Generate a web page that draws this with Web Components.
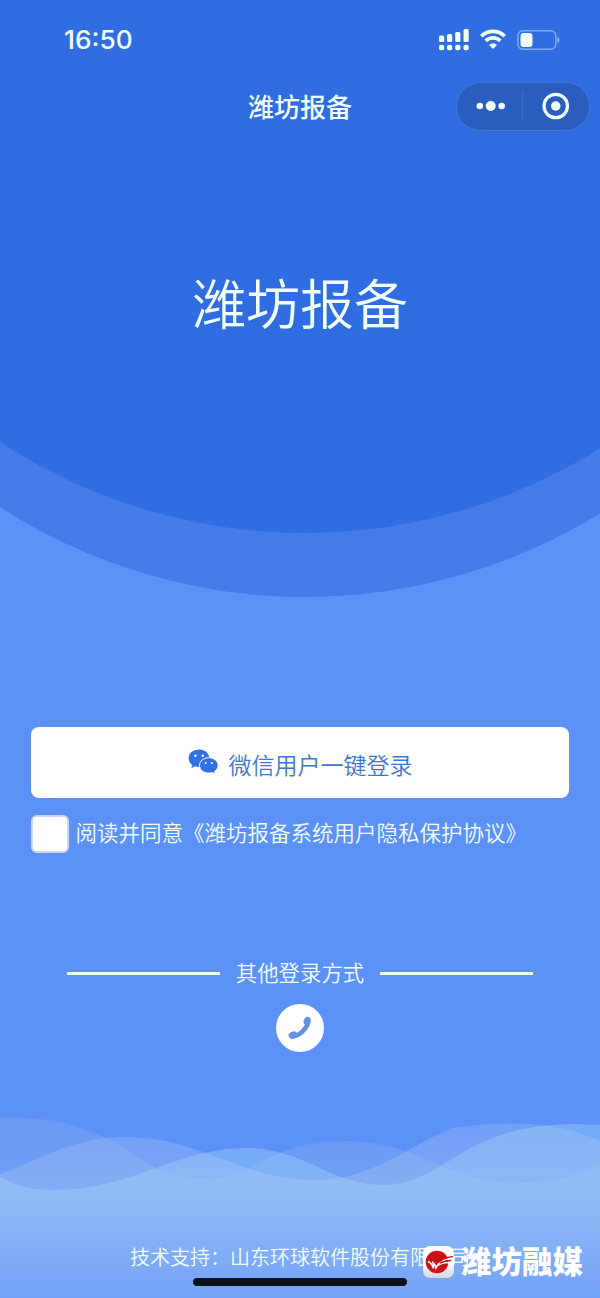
<!DOCTYPE html>
<html lang="zh-CN">
<head>
<meta charset="utf-8">
<title>潍坊报备</title>
<style>
  html, body {
    margin: 0;
    padding: 0;
  }
  body {
    width: 600px;
    height: 1298px;
    overflow: hidden;
    background: #5c91f7;
    color: #f1ffff;
    font-family: "Liberation Sans", "Noto Sans CJK SC", sans-serif;
  }
</style>
</head>
<body>
<login-page>
  <status-bar slot="top" time="16:50"></status-bar>
  <nav-bar slot="top">潍坊报备</nav-bar>
  <app-title>潍坊报备</app-title>
  <wechat-button>微信用户一键登录</wechat-button>
  <agree-check>阅读并同意《潍坊报备系统用户隐私保护协议》</agree-check>
  <line-divider>其他登录方式</line-divider>
  <phone-login></phone-login>
  <page-footer slot="bottom">技术支持：山东环球软件股份有限公司</page-footer>
  <media-mark slot="bottom">潍坊融媒</media-mark>
</login-page>

<script>
class BaseElement extends HTMLElement {
  constructor() {
    super()
    this._root = this.attachShadow({ mode: 'open' });
    this._root.innerHTML = this.render();
  }
}

class LoginPage extends BaseElement {
  render() {
    return `
    <style>
      :host {
        display: flex;
        flex-direction: column;
        position: relative;
        width: 600px;
        height: 1298px;
        overflow: hidden;
      }
      .bg {
        position: absolute;
        inset: 0;
        z-index: -1;
      }
      main {
        flex: 1;
        display: flex;
        flex-direction: column;
      }
    </style>
    <svg class="bg" width="600" height="1298" viewBox="0 0 600 1298">
      <defs>
        <linearGradient id="a" gradientUnits="userSpaceOnUse" x1="0" y1="1115" x2="0" y2="1298">
          <stop offset="0" stop-color="#a4c0e4" stop-opacity=".18"/>
          <stop offset=".4" stop-color="#a4c4ec" stop-opacity=".24"/>
          <stop offset="1" stop-color="#a8c8f4" stop-opacity=".08"/>
        </linearGradient>
        <linearGradient id="b" gradientUnits="userSpaceOnUse" x1="0" y1="1122" x2="0" y2="1298">
          <stop offset="0" stop-color="#b4ccf2" stop-opacity=".24"/>
          <stop offset=".35" stop-color="#bccbf6" stop-opacity=".32"/>
          <stop offset="1" stop-color="#bccbf6" stop-opacity=".1"/>
        </linearGradient>
        <linearGradient id="c" gradientUnits="userSpaceOnUse" x1="0" y1="1122" x2="0" y2="1298">
          <stop offset="0" stop-color="#a8e0f6" stop-opacity=".32"/>
          <stop offset=".4" stop-color="#a8e0f8" stop-opacity=".34"/>
          <stop offset="1" stop-color="#a8d0f8" stop-opacity=".12"/>
        </linearGradient>
      </defs>
      <circle cx="305" cy="35" r="562" fill="#457be9"/>
      <circle cx="305" cy="-24" r="557" fill="#306de0"/>
      <path fill="url(#a)" d="M0 1117 C46 1117 78 1123 110 1140 C142 1157 160 1179 205 1179 C252 1179 272 1141 342 1141 C425 1141 440 1183 526 1183 C560 1183 582 1172 600 1163 V1298 H0Z"/>
      <path fill="url(#b)" d="M0 1174 C38 1161 72 1137 125 1137 C202 1137 240 1180 315 1180 C372 1180 408 1146 452 1128 C510 1120 559 1122 600 1141 V1298 H0Z"/>
      <path fill="url(#c)" d="M0 1177 C17 1186 30 1190 56 1190 C130 1190 178 1148 245 1148 C305 1148 330 1185 382 1185 C445 1185 461 1124 575 1124 L600 1125 V1298 H0Z"/>
    </svg>
    <slot name="top"></slot>
    <main><slot></slot></main>
    <slot name="bottom"></slot>`;
  }
}

class StatusBar extends BaseElement {
  render() {
    return `
    <style>
      :host {
        display: flex;
        justify-content: space-between;
        align-items: center;
        height: 80px;
        padding: 0 40px 0 64px;
        box-sizing: border-box;
      }
      .time {
        margin-top: -1px;
        font: 550 26.300px/32px Inter, sans-serif;
      }
      svg { display: block; }
    </style>
    <span class="time">${this.getAttribute('time')}</span>
    <svg width="122" height="24" viewBox="438 28 122 24" fill="#f1ffff">
      <rect x="439" y="35.500" width="5.200" height="6.500" rx="1.500"/>
      <rect x="447" y="34" width="5.200" height="8" rx="1.500"/>
      <rect x="455.200" y="32" width="5.200" height="10" rx="1.500"/>
      <rect x="463.500" y="29" width="5.200" height="13" rx="1.500"/>
      <rect x="439" y="44.700" width="5.200" height="5.500" rx="1.800"/>
      <rect x="447" y="44.700" width="5.200" height="5.500" rx="1.800"/>
      <rect x="455.200" y="44.700" width="5.200" height="5.500" rx="1.800"/>
      <rect x="463.500" y="44.700" width="5.200" height="5.500" rx="1.800"/>
      <g fill="none" stroke="#f1ffff" stroke-width="3.700">
        <path d="M481.300 36.200 A16.500 16.500 0 0 1 504.700 36.200"/>
        <path d="M485.700 40.900 A10.300 10.300 0 0 1 500.300 40.900"/>
      </g>
      <path d="M489 44.900 A5.800 5.800 0 0 1 497 44.900 L493 49Z"/>
      <rect x="517.800" y="30.800" width="38" height="18.500" rx="5" fill="none" stroke="#7fa8f0" stroke-width="1.500"/>
      <rect x="520.500" y="33" width="12" height="14" rx="3"/>
      <path d="M557.500 36.800 Q559.500 38 559.500 40 T557.500 43.200Z" fill="#9abcf4"/>
    </svg>`;
  }
}

class NavBar extends BaseElement {
  render() {
    return `
    <style>
      :host {
        display: grid;
        grid-template-columns: 1fr auto 1fr;
        align-items: center;
        height: 52px;
        padding: 0 10.500px;
        font-size: 26px;
        font-weight: 500;
      }
      .title { margin-top: -2px; }
      .capsule {
        justify-self: end;
        display: flex;
        align-items: center;
        box-sizing: border-box;
        width: 134px;
        height: 49px;
        border: 1px solid #4177dc;
        border-radius: 25px;
        background: #2a5dbd;
      }
      .capsule > * { flex: 1; }
      .capsule i {
        flex: none;
        width: 1px;
        height: 30px;
        background: #3a6dcb;
      }
    </style>
    <span></span>
    <span class="title"><slot></slot></span>
    <div class="capsule">
      <svg height="30" viewBox="-33 -15 66 30" fill="#f1ffff">
        <circle cx="-10" r="3.300"/><circle cx="1" r="5"/><circle cx="12" r="3.300"/>
      </svg>
      <i></i>
      <svg height="30" viewBox="-33 -15 66 30" fill="#f1ffff">
        <circle r="4.800"/><circle r="11.800" fill="none" stroke="#f1ffff" stroke-width="3.200"/>
      </svg>
    </div>`;
  }
}

class AppTitle extends BaseElement {
  render() {
    return `
    <style>
      :host {
        display: block;
        margin-top: 134px;
        height: 80px;
        text-align: center;
        font-size: 54px;
        font-weight: 350;
        line-height: 80px;
      }
    </style>
    <slot></slot>`;
  }
}

class WechatButton extends BaseElement {
  render() {
    return `
    <style>
      :host {
        display: flex;
        justify-content: center;
        align-items: center;
        gap: 10px;
        margin: 381px 31px 0;
        height: 71px;
        border-radius: 8px;
        background: #fff;
        color: #3f76cb;
        font-size: 23px;
        font-weight: 350;
      }
      svg { margin-top: -1px; }
      .text { margin-top: 2px; }
    </style>
    <svg width="31" height="26" viewBox="0 0 31 26" fill="#2f70e5">
      <path d="M11 .5C5 .5.700 4.400.700 9.300c0 2.800 1.400 5.300 3.700 6.900l-1.100 3.100 3.900-2c1.200.4 2.500.6 3.800.6 5.900 0 10.200-3.900 10.200-8.700S17 .5 11 .5Z"/>
      <path stroke="#fff" stroke-width="1" d="M20.800 8.700c-5 0-9.300 3.300-9.300 7.700s4.200 7.700 9.300 7.700c1.100 0 2.200-.2 3.200-.5l3.300 1.600-.8-2.700c2.200-1.400 3.600-3.600 3.600-6.100 0-4.400-4.200-7.700-9.300-7.700Z"/>
      <g fill="#fff"><circle cx="7.500" cy="6.800" r="1.200"/><circle cx="14.700" cy="6.800" r="1.200"/><circle cx="17.700" cy="14" r="1.050"/><circle cx="23.800" cy="14" r="1.050"/></g>
    </svg>
    <span class="text"><slot></slot></span>`;
  }
}

class AgreeCheck extends BaseElement {
  render() {
    return `
    <style>
      :host {
        display: flex;
        align-items: center;
        gap: 7px;
        margin: 17px 0 0 30.500px;
        height: 38px;
        font-size: 21.500px;
        font-weight: 350;
        white-space: nowrap;
      }
      .box {
        flex: none;
        box-sizing: border-box;
        width: 38px;
        height: 38px;
        border: 2px solid #cbd8f5;
        border-radius: 6px;
        background: #fff;
      }
      .text { margin-top: -6px; }
    </style>
    <span class="box"></span>
    <span class="text"><slot></slot></span>`;
  }
}

class LineDivider extends BaseElement {
  render() {
    return `
    <style>
      :host {
        display: flex;
        align-items: center;
        gap: 16px;
        margin: 104px 67px 0;
        height: 32px;
        font-size: 21.400px;
        font-weight: 350;
      }
      :host::before, :host::after {
        content: "";
        flex: 1;
        height: 3px;
        background: #f1ffff;
      }
      .text { margin-top: -4px; }
    </style>
    <span class="text"><slot></slot></span>`;
  }
}

class PhoneLogin extends BaseElement {
  render() {
    return `
    <style>
      :host {
        display: grid;
        place-items: center;
        align-self: center;
        margin-top: 15px;
        width: 48px;
        height: 48px;
        border-radius: 50%;
        background: #fff;
      }
    </style>
    <svg width="24" height="24" viewBox="0 0 24 24" fill="#6691e0">
      <path fill="none" stroke="#6691e0" stroke-width="4.600" stroke-linecap="round" d="M20.400 5.500C19.500 11.500 12.500 19.300 4.500 20.500"/>
      <ellipse cx="19.200" cy="5" rx="3.500" ry="4.200" transform="rotate(22 19.200 5)"/>
      <ellipse cx="5" cy="19" rx="4.500" ry="3.500" transform="rotate(-20 5 19)"/>
    </svg>`;
  }
}

class PageFooter extends BaseElement {
  render() {
    return `
    <style>
      :host {
        display: flex;
        flex-direction: column;
        align-items: center;
        height: 55px;
        font-size: 20px;
        font-weight: 350;
        line-height: 30px;
        white-space: nowrap;
      }
      .home {
        margin-top: 5px;
        width: 214px;
        height: 8px;
        border-radius: 4px;
        background: #0b1119;
      }
    </style>
    <slot></slot>
    <div class="home"></div>`;
  }
}

// watermark that lies over the footer
class MediaMark extends BaseElement {
  render() {
    return `
    <style>
      :host {
        position: absolute;
        right: 17px;
        bottom: 19px;
        display: flex;
        align-items: center;
        gap: 7px;
        color: #fff;
        font-size: 30.500px;
        font-weight: 900;
        line-height: 34px;
      }
      svg { display: block; }
    </style>
    <svg width="31" height="32" viewBox="0 0 31 32">
      <defs>
        <linearGradient id="g" x1="0" y1="0" x2="0" y2="1">
          <stop offset=".5" stop-color="#fff"/><stop offset="1" stop-color="#d5d7dc"/>
        </linearGradient>
      </defs>
      <rect width="31" height="32" rx="7" fill="url(#g)"/>
      <circle cx="14" cy="16" r="11.300" fill="#cb1017"/>
      <path fill="none" stroke="#fff" stroke-width="1.500" d="M5 15.500C8 16.500 9 18 10.500 22.500C11 19 10.500 17.500 9.500 15.500M10.500 17C12 18 12.500 19.500 13 22C15 17 19 13 30 12.500M13.500 20.500C17 17 21 16.300 27 16.500"/>
      <path fill="none" stroke="#cb1017" stroke-width="1.300" d="M16 16C20 12.300 23 11 30 10.700M17 17.500C20 15.300 23 14.700 28 14.500"/>
    </svg>
    <slot></slot>`;
  }
}

window.customElements.define('login-page', LoginPage);
window.customElements.define('status-bar', StatusBar);
window.customElements.define('nav-bar', NavBar);
window.customElements.define('app-title', AppTitle);
window.customElements.define('wechat-button', WechatButton);
window.customElements.define('agree-check', AgreeCheck);
window.customElements.define('line-divider', LineDivider);
window.customElements.define('phone-login', PhoneLogin);
window.customElements.define('page-footer', PageFooter);
window.customElements.define('media-mark', MediaMark);
</script>
</body>
</html>
